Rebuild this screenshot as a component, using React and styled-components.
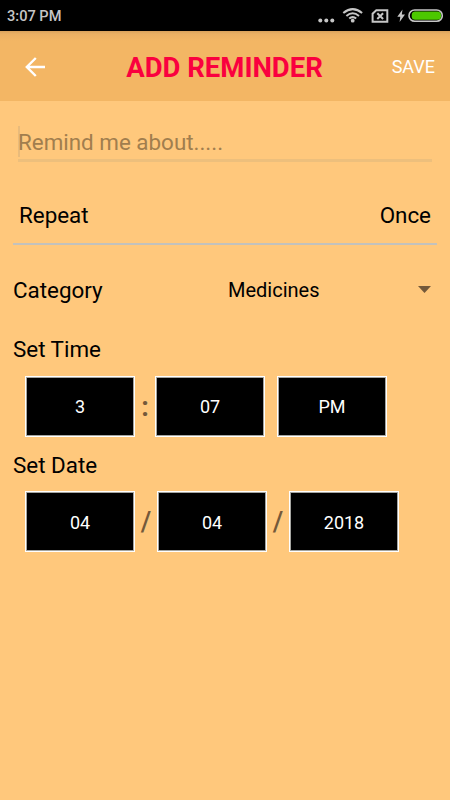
import React from 'react'
import styled, { createGlobalStyle } from 'styled-components'

const GlobalStyle = createGlobalStyle`
    body{
        margin: 0;
        background-color: #ffc87c;
        font-family: Roboto, 'Liberation Sans', sans-serif;
    }
    *{
        box-sizing: border-box;
    }
`

const Screen = styled.div`
    width: 450px;
    height: 800px;
    overflow: hidden;
    background-color: #ffc87c;
    color: #000;
`

const StatusBar = styled.div`
    height: 31px;
    padding: 1px 6px 0 7px;
    display: flex;
    align-items: center;
    justify-content: space-between;
    background-color: #000;
    color: #c6c6c6;
`

const Clock = styled.span`
    font-size: 14.6px;
    font-weight: 500;
    line-height: 20px;
`

const StatusIcons = styled.svg`
    display: block;
    width: 128px;
    height: 20px;
`

const Header = styled.header`
    height: 70px;
    padding: 2px 15px 0 21px;
    display: grid;
    grid-template-columns: 28px 1fr 45px;
    align-items: center;
    background: linear-gradient(#d9a25c 0, #eab064 3px, #f3b664 10px);
`

const BackIcon = styled.svg`
    display: block;
    width: 28px;
    height: 28px;
    margin-top: -1px;
`

const Title = styled.h1`
    margin: 1px 0 0;
    padding-left: 10px;
    font-size: 27.5px;
    font-weight: 700;
    line-height: 32px;
    text-align: center;
    white-space: nowrap;
    color: #fa003f;
`

const SaveButton = styled.button`
    padding: 0;
    border: none;
    background: none;
    font-family: inherit;
    font-size: 18px;
    line-height: 24px;
    text-align: right;
    color: #fff;
`

const Form = styled.main`
    padding: 22px 13px 0;
`

const ReminderField = styled.div`
    height: 39px;
    margin: 0 5px;
    padding-top: 2px;
    display: flex;
    align-items: center;
    border-bottom: 3px solid #edbf7c;
    font-size: 22.4px;
    line-height: 30px;
    color: #a17e4e;
`

const Caret = styled.span`
    width: 2px;
    height: 31px;
    margin: -2px -2px 0 0;
    background-color: #e9bb7b;
`

const Row = styled.div`
    display: flex;
    align-items: center;
    justify-content: space-between;
    height: ${(props) => props.$height}px;
    padding: ${(props) => props.$padding || '0'};
    border-bottom: ${(props) => (props.$line ? '2px solid #c3c2bd' : 'none')};
    font-size: 22.4px;
    line-height: 30px;
`

const Spinner = styled.div`
    width: 203px;
    display: flex;
    align-items: center;
    justify-content: space-between;
    font-size: 20px;
`

const Arrow = styled.svg`
    display: block;
    width: 13px;
    height: 7px;
    margin-top: -1px;
`

const Pickers = styled.div`
    height: 61px;
    padding-left: 12px;
    display: flex;
    align-items: center;
`

const Picker = styled.button`
    width: 110px;
    height: 61px;
    padding: ${(props) => (props.$date ? '2px' : '1px')} 0 0;
    border: 1px solid #fff;
    background-color: #000;
    box-shadow: inset 0 0 0 1px #a5a5a0;
    font-family: inherit;
    font-size: 18px;
    line-height: 24px;
    color: #fff;
`

const Separator = styled.span`
    width: ${(props) => props.$width}px;
    font-size: 27px;
    font-weight: ${(props) => props.$weight || 500};
    line-height: 32px;
    text-align: center;
    color: #74593a;
`

const App = () => {
  return (
    <>
      <GlobalStyle />
      <Screen>
        <StatusBar>
          <Clock>3:07 PM</Clock>
          <StatusIcons viewBox="316 6 128 20" fill="none">
            <g fill="#c6c6c6">
              <circle cx="320.3" cy="20.5" r="2" />
              <circle cx="326.3" cy="20.5" r="2" />
              <circle cx="332.3" cy="20.5" r="2" />
              <circle cx="352.7" cy="20.7" r="1.9" />
              <path d="M402.5 9.5 L397.3 16.8 H400.3 L399.6 22 L405 14.6 H401.8 Z" />
            </g>
            <g stroke="#c6c6c6" strokeWidth="2">
              <path d="M343.3 13 Q352.7 5.2 362.1 13" />
              <path d="M346.4 16 Q352.7 10.6 359 16" />
              <path d="M349.2 18.6 Q352.7 15.6 356.2 18.6" />
              <path d="M376.3 10.2 H387.3 V21.8 H372.6 V13.7 Z" />
              <path d="M377.3 13.2 L383.1 19 M383.1 13.2 L377.3 19" />
            </g>
            <rect x="409" y="10" width="33.3" height="11.3" rx="5.65" stroke="#c6c6c6" strokeWidth="1.6" />
            <rect x="411.7" y="11.6" width="29.3" height="8.2" rx="3.5" fill="#4cc800" />
          </StatusIcons>
        </StatusBar>

        <Header>
          <BackIcon viewBox="0 0 28 28" fill="none" stroke="#fff" strokeWidth="2.4">
            <path d="M24 14 H6.5 M14.8 5 L5.8 14 L14.8 23" />
          </BackIcon>
          <Title>ADD REMINDER</Title>
          <SaveButton>SAVE</SaveButton>
        </Header>

        <Form>
          <ReminderField>
            <Caret />
            Remind me about.....
          </ReminderField>
          <Row $height={83} $padding="24px 6px 0" $line>
            <span>Repeat</span>
            <span>Once</span>
          </Row>
          <Row $height={88} $padding="1px 6px 0 0">
            <span>Category</span>
            <Spinner>
              Medicines
              <Arrow viewBox="0 0 13 7">
                <path d="M0 0 H13 L6.5 7 Z" fill="#74593a" />
              </Arrow>
            </Spinner>
          </Row>
          <Row $height={43} $padding="0 0 11px">Set Time</Row>
          <Pickers>
            <Picker>3</Picker>
            <Separator $width={20} $weight={700}>:</Separator>
            <Picker>07</Picker>
            <Separator $width={12} />
            <Picker>PM</Picker>
          </Pickers>
          <Row $height={54} $padding="2px 0 0">Set Date</Row>
          <Pickers>
            <Picker $date>04</Picker>
            <Separator $width={22}>/</Separator>
            <Picker $date>04</Picker>
            <Separator $width={22}>/</Separator>
            <Picker $date>2018</Picker>
          </Pickers>
        </Form>
      </Screen>
    </>
  )
}

export default App
